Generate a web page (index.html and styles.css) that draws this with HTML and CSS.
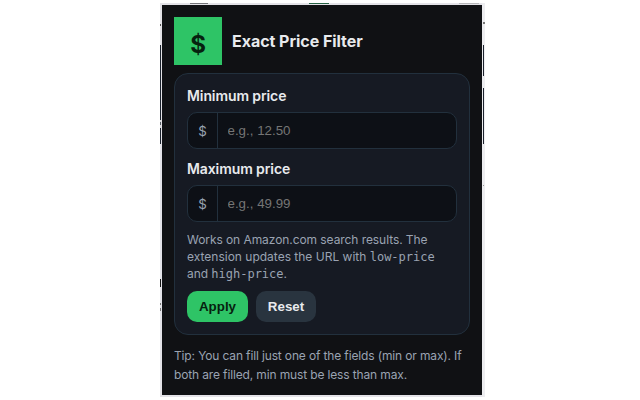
FILE: index.html
```html
<!DOCTYPE html>
<html lang="en">
<head>
<meta charset="utf-8">
<title>Exact Price Filter</title>
<link rel="stylesheet" href="styles.css">
</head>
<body>
<div class="frame">
  <svg class="backdrop" width="325" height="394" viewBox="0 0 325 394" aria-hidden="true">
    <rect width="325" height="394" fill="#e4e3e8"/>
    <rect x="0" y="42" width="1" height="99" fill="#1c222d"/>
    <rect x="0" y="117" width="1" height="8" fill="#d5d6da"/>
    <rect x="0" y="119" width="1" height="3" fill="#555b63"/>
    <rect x="0" y="21" width="1" height="2" fill="#555"/>
    <rect x="0" y="276" width="1" height="8" fill="#171717"/>
    <rect x="0" y="300" width="1" height="2" fill="#777"/>
    <rect x="0" y="305" width="1" height="3" fill="#777"/>
    <rect x="322" y="0" width="3" height="394" fill="#ededf0"/>
    <rect x="323" y="19" width="2" height="2" fill="#777"/>
    <rect x="323" y="42" width="1" height="31" fill="#1c222d"/>
    <rect x="323" y="85" width="1" height="56" fill="#1c222d"/>
    <rect x="323" y="182" width="1" height="1" fill="#999"/>
    <rect x="30" y="0" width="18" height="1" fill="#75757a"/>
    <rect x="149" y="0" width="20" height="1" fill="#276345"/>
    <rect x="299" y="0" width="20" height="1" fill="#b8b8bb"/>
  </svg>
  <main class="popup">
    <header class="header">
      <div class="logo"><span class="logo-sign">$</span></div>
      <h1 class="title">Exact Price Filter</h1>
    </header>
    <section class="card">
      <label class="label" for="min">Minimum price</label>
      <div class="field"><span class="prefix">$</span><input class="input" id="min" placeholder="e.g., 12.50"></div>
      <label class="label" for="max">Maximum price</label>
      <div class="field"><span class="prefix">$</span><input class="input" id="max" placeholder="e.g., 49.99"></div>
      <p class="hint">Works on Amazon.com search results. The<br><span class="hint-wide">extension updates the URL with </span><code>low-price</code><br>and <code>high-price</code>.</p>
      <div class="actions">
        <button class="button apply">Apply</button>
        <button class="button reset">Reset</button>
      </div>
    </section>
    <p class="tip">Tip: You can fill just one of the fields (min or max). If<br>both are filled, min must be less than max.</p>
  </main>
</div>
</body>
</html>
```
FILE: styles.css
```css
* { box-sizing: border-box; }
body { margin: 0; background: #fff; font-family: Inter, sans-serif; overflow: hidden; }
.frame { position: relative; width: 325px; height: 394px; margin: 3px 0 0 160px; padding: 2px 0 0 2px; }
.backdrop { position: absolute; inset: 0; }
.popup { position: relative; width: 320px; height: 390px; padding: 12px; background: #101114; color: #e8eaed; }
.header { display: flex; align-items: center; gap: 10px; height: 48px; margin-bottom: 8px; }
.logo { width: 48px; height: 48px; display: flex; align-items: center; justify-content: center; background: #2ec466; color: #06210f; }
.logo-sign { font: 700 24px/30px Inter, sans-serif; padding-top: 8px; }
.title { margin: 0; font-size: 16px; font-weight: 700; letter-spacing: -0.04px; line-height: 20px; white-space: nowrap; }
.card { height: 262px; padding: 12px; border: 1px solid #22303d; border-radius: 14px; background: #161a23; }
.label { display: block; height: 20px; margin-bottom: 6px; font-size: 14px; font-weight: 600; letter-spacing: -0.1px; line-height: 20px; }
.field { display: flex; height: 37px; margin-bottom: 10px; border: 1px solid #22303d; border-radius: 10px; background: #0d1016; overflow: hidden; }
.prefix { width: 30px; border-right: 1px solid #22303d; color: #9aa3b2; font-size: 13.33px; line-height: 36px; text-align: center; }
.input { flex: 1; min-width: 0; padding: 0 9.5px 1px; border: 0; background: transparent; color: #e8eaed; font: 13.33px "Liberation Sans", sans-serif; }
.input::placeholder { color: #757575; }
.hint { margin: -1px 0 0; font-size: 12px; line-height: 17px; letter-spacing: -0.07px; color: #9aa3b2; white-space: nowrap; }
.hint-wide { letter-spacing: 0; }
.hint code { font: 12px/1 "DejaVu Sans Mono", monospace; letter-spacing: 0; }
.actions { display: flex; gap: 8px; margin-top: 9px; }
.button { height: 31px; padding: 0; border: 0; border-radius: 10px; font: bold 13.33px "Liberation Sans", sans-serif; }
.apply { width: 61px; background: #2ec466; color: #06210f; }
.reset { width: 60px; background: #29343f; color: #e8eaed; }
.tip { margin: 11px 0 0; font-size: 12px; line-height: 19px; letter-spacing: -0.14px; color: #9aa3b2; white-space: nowrap; }
```
